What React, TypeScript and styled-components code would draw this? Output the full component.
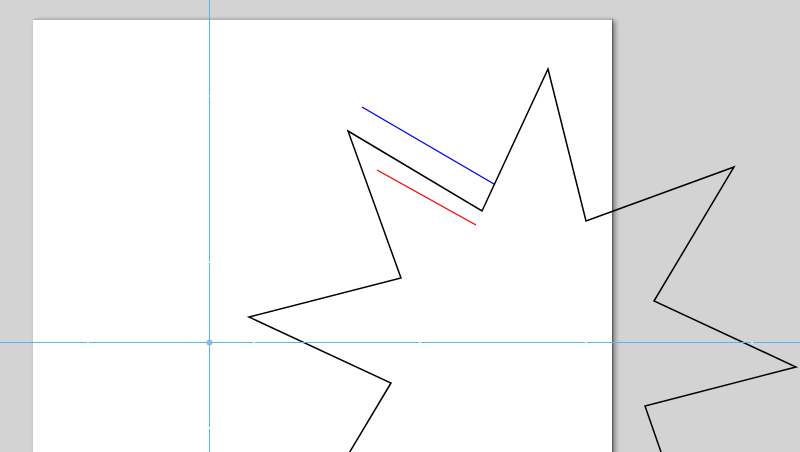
import React from "react";
import styled, { createGlobalStyle } from "styled-components";

const GlobalStyle = createGlobalStyle`
  html, body {
    margin: 0;
    padding: 0;
    overflow: hidden;
    font-family: "Liberation Sans", Arial, sans-serif;
  }
`;

const Workspace = styled.div`
  position: relative;
  width: 800px;
  height: 452px;
  overflow: hidden;
  background: #d3d3d3;
`;

const Page = styled.div`
  margin: 19px 0 0 33px;
  width: 579px;
  height: 520px;
  background: #fff;
  border-top: 1px solid #b4b4b4;
  box-shadow: 1px 0 1px rgba(0, 0, 0, 0.3), 3px 2px 5px rgba(0, 0, 0, 0.45);
`;

const Canvas = styled.svg`
  position: absolute;
  inset: 0;
  width: 800px;
  height: 452px;
`;

// guide positions on the canvas
const GUIDE_X = 209.5;
const GUIDE_Y = 342.5;
const GUIDE_COLOR = "#5ab2ef";

const star = [
  [348, 131],
  [482, 211],
  [548, 69],
  [586, 221],
  [734, 167],
  [654, 301],
  [796, 367],
  [645, 406],
  [677, 498],
  [333, 480],
  [391, 383],
  [249, 317],
  [401, 278],
];

const App: React.FC = () => {
  const ticksX = [87, 253, 419, 585, 751];
  const ticksY = [95, 261, 427];
  return (
    <>
      <GlobalStyle />
      <Workspace>
        <Page />
        <Canvas viewBox="0 0 800 452">
          <polygon
            points={star.map((p) => p.join(",")).join(" ")}
            fill="none"
            stroke="#000"
            strokeWidth={1.5}
            strokeLinejoin="miter"
          />
          <line x1={362} y1={107} x2={494} y2={184} stroke="#0000ff" strokeWidth={1.4} />
          <line x1={377} y1={170} x2={476} y2={225} stroke="#ff0000" strokeWidth={1.4} />

          {/* ruler guides */}
          <line x1={GUIDE_X} y1={0} x2={GUIDE_X} y2={452} stroke={GUIDE_COLOR} strokeWidth={1} />
          <line x1={0} y1={GUIDE_Y} x2={800} y2={GUIDE_Y} stroke={GUIDE_COLOR} strokeWidth={1} />
          {ticksX.map((x) => (
            <rect key={"tx" + x} x={x} y={GUIDE_Y - 0.5} width={2} height={1} fill="#e8f3fc" />
          ))}
          {ticksY.map((y) => (
            <rect key={"ty" + y} x={GUIDE_X - 0.5} y={y} width={1} height={2} fill="#e8f3fc" />
          ))}
          <circle cx={GUIDE_X} cy={GUIDE_Y} r={3} fill="#8ab8e8" />
        </Canvas>
      </Workspace>
    </>
  );
};

export default App;
